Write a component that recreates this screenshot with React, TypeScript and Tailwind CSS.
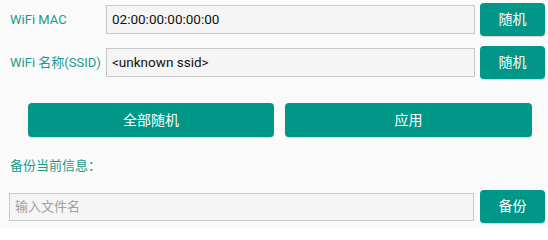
const font = { fontFamily: 'Roboto, "Noto Sans CJK SC", sans-serif' };

function Btn({ label, className }: { label: string; className?: string }) {
  return (
    <button
      className={
        'flex items-center justify-center rounded-[4px] bg-[#009688] text-[14px] text-white shadow-[0_1px_1px_rgba(0,0,0,0.15)] ' +
        (className ?? '')
      }
    >
      {label}
    </button>
  );
}

function Field({ value, placeholder, className }: { value?: string; placeholder?: string; className?: string }) {
  return (
    <div
      className={
        'flex items-center border border-[#c8c8c8] bg-[#f5f5f5] px-[5px] text-[13.5px] ' +
        (value ? 'text-[#111]' : 'text-[#a0a0a0]') +
        ' ' +
        (className ?? '')
      }
    >
      {value ?? placeholder}
    </div>
  );
}

export default function App() {
  return (
    <div className="h-[228px] w-[548px] overflow-hidden bg-[#fafafa]" style={font}>
      {/* WiFi MAC */}
      <div className="flex h-[33px] items-center pl-[10px] pt-0 mt-[3px]">
        <span className="w-[96px] text-[13px] text-[#1a9a8c]">WiFi MAC</span>
        <Field value="02:00:00:00:00:00" className="h-[29px] w-[369px]" />
        <Btn label="随机" className="ml-[5px] h-[33px] w-[65px]" />
      </div>

      {/* SSID */}
      <div className="mt-[10px] flex h-[33px] items-center pl-[10px]">
        <span className="w-[96px] whitespace-nowrap text-[13px] text-[#1a9a8c]">WiFi 名称(SSID)</span>
        <Field value="<unknown ssid>" className="h-[29px] w-[369px]" />
        <Btn label="随机" className="ml-[5px] h-[33px] w-[65px]" />
      </div>

      {/* big buttons */}
      <div className="mt-[24px] flex gap-[11px] pl-[28px]">
        <Btn label="全部随机" className="h-[34px] w-[246px]" />
        <Btn label="应用" className="h-[34px] w-[247px]" />
      </div>

      <div className="mt-[20px] pl-[10px] text-[13px] leading-[18px] text-[#1a9a8c]">备份当前信息：</div>

      <div className="mt-[15px] flex h-[33px] items-center pl-[9px]">
        <Field placeholder="输入文件名" className="h-[28px] w-[465px] text-[13px]" />
        <Btn label="备份" className="ml-[6px] h-[33px] w-[65px]" />
      </div>
    </div>
  );
}
